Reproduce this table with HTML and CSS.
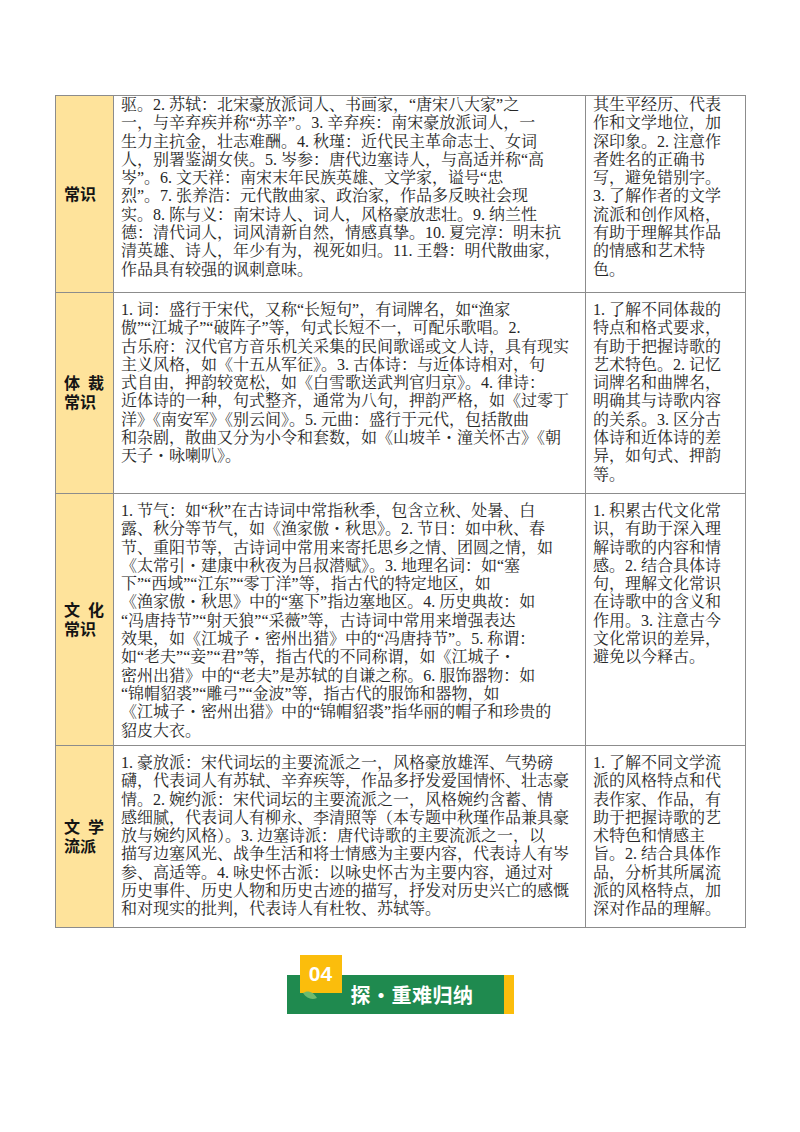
FILE: index.html
```html
<!DOCTYPE html>
<html lang="zh-CN">
<head>
<meta charset="utf-8">
<title>常识归纳</title>
<link rel="stylesheet" href="styles.css">
</head>
<body>
<div class="page">
  <div class="sheet">
    <div class="cell label"><span>常识</span></div>
    <div class="cell text first">驱。2. 苏轼：北宋豪放派词人、书画家，“唐宋八大家”之<br>一，与辛弃疾并称“苏辛”。3. 辛弃疾：南宋豪放派词人，一<br>生力主抗金，壮志难酬。4. 秋瑾：近代民主革命志士、女词<br>人，别署鉴湖女侠。5. 岑参：唐代边塞诗人，与高适并称“高<br>岑”。6. 文天祥：南宋末年民族英雄、文学家，谥号“忠<br>烈”。7. 张养浩：元代散曲家、政治家，作品多反映社会现<br>实。8. 陈与义：南宋诗人、词人，风格豪放悲壮。9. 纳兰性<br>德：清代词人，词风清新自然，情感真挚。10. 夏完淳：明末抗<br>清英雄、诗人，年少有为，视死如归。11. 王磐：明代散曲家，<br>作品具有较强的讽刺意味。</div>
    <div class="cell text first">其生平经历、代表<br>作和文学地位，加<br>深印象。2. 注意作<br>者姓名的正确书<br>写，避免错别字。<br>3. 了解作者的文学<br>流派和创作风格，<br>有助于理解其作品<br>的情感和艺术特<br>色。</div>

    <div class="cell label"><span>体&ensp;裁<br>常识</span></div>
    <div class="cell text">1. 词：盛行于宋代，又称“长短句”，有词牌名，如“渔家<br>傲”“江城子”“破阵子”等，句式长短不一，可配乐歌唱。2.<br>古乐府：汉代官方音乐机关采集的民间歌谣或文人诗，具有现实<br>主义风格，如《十五从军征》。3. 古体诗：与近体诗相对，句<br>式自由，押韵较宽松，如《白雪歌送武判官归京》。4. 律诗：<br>近体诗的一种，句式整齐，通常为八句，押韵严格，如《过零丁<br>洋》《南安军》《别云间》。5. 元曲：盛行于元代，包括散曲<br>和杂剧，散曲又分为小令和套数，如《山坡羊・潼关怀古》《朝<br>天子・咏喇叭》。</div>
    <div class="cell text">1. 了解不同体裁的<br>特点和格式要求，<br>有助于把握诗歌的<br>艺术特色。2. 记忆<br>词牌名和曲牌名，<br>明确其与诗歌内容<br>的关系。3. 区分古<br>体诗和近体诗的差<br>异，如句式、押韵<br>等。</div>

    <div class="cell label"><span>文&ensp;化<br>常识</span></div>
    <div class="cell text">1. 节气：如“秋”在古诗词中常指秋季，包含立秋、处暑、白<br>露、秋分等节气，如《渔家傲・秋思》。2. 节日：如中秋、春<br>节、重阳节等，古诗词中常用来寄托思乡之情、团圆之情，如<br>《太常引・建康中秋夜为吕叔潜赋》。3. 地理名词：如“塞<br>下”“西域”“江东”“零丁洋”等，指古代的特定地区，如<br>《渔家傲・秋思》中的“塞下”指边塞地区。4. 历史典故：如<br>“冯唐持节”“射天狼”“采薇”等，古诗词中常用来增强表达<br>效果，如《江城子・密州出猎》中的“冯唐持节”。5. 称谓：<br>如“老夫”“妾”“君”等，指古代的不同称谓，如《江城子・<br>密州出猎》中的“老夫”是苏轼的自谦之称。6. 服饰器物：如<br>“锦帽貂裘”“雕弓”“金波”等，指古代的服饰和器物，如<br>《江城子・密州出猎》中的“锦帽貂裘”指华丽的帽子和珍贵的<br>貂皮大衣。</div>
    <div class="cell text">1. 积累古代文化常<br>识，有助于深入理<br>解诗歌的内容和情<br>感。2. 结合具体诗<br>句，理解文化常识<br>在诗歌中的含义和<br>作用。3. 注意古今<br>文化常识的差异，<br>避免以今释古。</div>

    <div class="cell label"><span>文&ensp;学<br>流派</span></div>
    <div class="cell text">1. 豪放派：宋代词坛的主要流派之一，风格豪放雄浑、气势磅<br>礴，代表词人有苏轼、辛弃疾等，作品多抒发爱国情怀、壮志豪<br>情。2. 婉约派：宋代词坛的主要流派之一，风格婉约含蓄、情<br>感细腻，代表词人有柳永、李清照等（本专题中秋瑾作品兼具豪<br>放与婉约风格）。3. 边塞诗派：唐代诗歌的主要流派之一，以<br>描写边塞风光、战争生活和将士情感为主要内容，代表诗人有岑<br>参、高适等。4. 咏史怀古派：以咏史怀古为主要内容，通过对<br>历史事件、历史人物和历史古迹的描写，抒发对历史兴亡的感慨<br>和对现实的批判，代表诗人有杜牧、苏轼等。</div>
    <div class="cell text">1. 了解不同文学流<br>派的风格特点和代<br>表作家、作品，有<br>助于把握诗歌的艺<br>术特色和情感主<br>旨。2. 结合具体作<br>品，分析其所属流<br>派的风格特点，加<br>深对作品的理解。</div>
  </div>

  <div class="banner">
    <div class="bar"><span class="title">探・重难归纳</span></div>
    <div class="num">04</div>
    <svg class="leaf" width="16" height="12" viewBox="0 0 16 12" aria-hidden="true">
      <path d="M1 4 C5 1 11 2 15 9 C10 11 5 10 1 4 Z" fill="#6dbb6e"/>
    </svg>
  </div>
</div>
</body>
</html>
```
FILE: styles.css
```css
* { box-sizing: border-box; }

html, body {
  margin: 0;
  padding: 0;
  background: #ffffff;
}

.page {
  width: 800px;
  height: 1132px;
  padding-top: 95px;
  overflow: hidden;
}

.sheet {
  margin-left: 55px;
  width: 691px;
  display: grid;
  grid-template-columns: 58px 472px 160px;
  grid-template-rows: 197px 201px 252px 182px;
  border-top: 1px solid #8c8c8c;
  border-left: 1px solid #8c8c8c;
}

.cell {
  border-right: 1px solid #8c8c8c;
  border-bottom: 1px solid #8c8c8c;
}

.label {
  background: #fee39b;
  display: flex;
  align-items: center;
  padding-left: 8px;
  font-family: "Liberation Sans", "Noto Sans CJK SC", sans-serif;
  font-weight: 700;
  font-size: 16px;
  line-height: 19px;
  color: #141414;
}

.text {
  font-family: "Liberation Serif", "Noto Serif CJK SC", "Noto Sans CJK SC", serif;
  font-size: 16px;
  line-height: 18.3px;
  color: #262626;
  padding: 8px 4px 0 7px;
  white-space: nowrap;
}

.first.text { padding-top: 0; }

.banner {
  position: relative;
  width: 227px;
  margin: 27px auto 0;
  padding-top: 20px;
}

.bar {
  height: 39px;
  background: #1f8a4f;
  border-right: 10px solid #fbbd0c;
  display: flex;
  align-items: center;
  padding-left: 64px;
}

.title {
  font-family: "Noto Sans CJK SC", sans-serif;
  font-weight: 700;
  font-size: 20px;
  line-height: 1;
  color: #ffffff;
  letter-spacing: 0.5px;
}

.num {
  position: absolute;
  left: 13px;
  top: 0;
  width: 42px;
  height: 38px;
  background: #fbbd0c;
  color: #ffffff;
  font-family: "Liberation Sans", Arial, sans-serif;
  font-weight: 700;
  font-size: 21px;
  line-height: 38px;
  text-align: center;
}

.leaf {
  position: absolute;
  left: 15px;
  top: 34px;
}
```
